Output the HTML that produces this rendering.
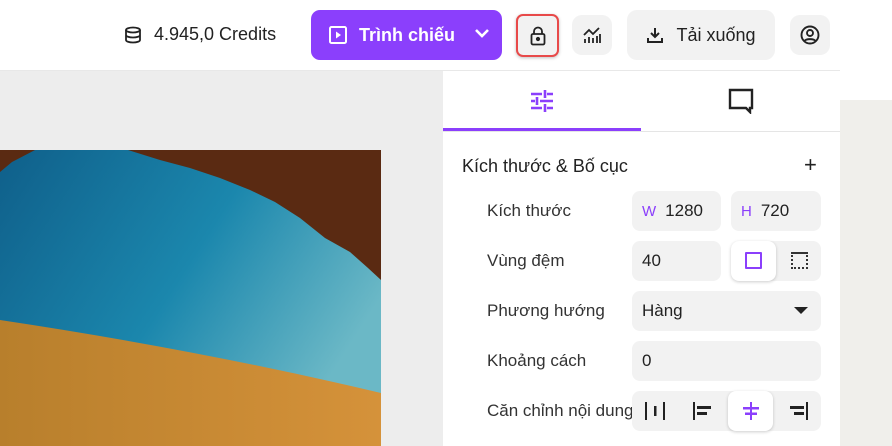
<!DOCTYPE html>
<html><head><meta charset="utf-8"><style>
*{box-sizing:border-box;margin:0;padding:0}
body{width:892px;height:446px;overflow:hidden;position:relative;background:#fff;font-family:"Liberation Sans","Noto Sans CJK SC",sans-serif;color:#222}
.a{position:absolute}
.btn{position:absolute;background:#f2f2f2;border-radius:10px;display:flex;align-items:center;justify-content:center}
.inp{position:absolute;background:#f2f2f2;border-radius:8px;height:40px;display:flex;align-items:center;font-size:17px;color:#222}
.lbl{position:absolute;left:487px;font-size:17px;color:#333}
</style></head><body>
<div class="a" style="left:0;top:71px;width:443px;height:375px;background:#ededed"></div>
<div class="a" style="left:0;top:70px;width:840px;height:1px;background:#e8e8e8"></div>
<div class="a" style="left:840px;top:100px;width:52px;height:346px;background:#f0efeb"></div>
<!-- image -->
<svg class="a" style="left:0;top:150px" width="381" height="296" viewBox="0 0 381 296">
<defs><linearGradient id="sky" x1="0" y1="0" x2="1" y2="0.5"><stop offset="0" stop-color="#0f5f8a"/><stop offset="0.55" stop-color="#1b87ad"/><stop offset="1" stop-color="#6bb8c6"/></linearGradient>
<linearGradient id="sand" x1="0" y1="0" x2="1" y2="0"><stop offset="0" stop-color="#b87f2c"/><stop offset="1" stop-color="#d5923a"/></linearGradient></defs>
<rect width="381" height="296" fill="url(#sky)"/>
<path d="M128 0 L381 0 L381 130 L368 118 L350 102 L325 88 L300 68 L275 52 L250 40 L220 28 L190 18 L160 10 Z" fill="#5a2a12"/>
<path d="M0 0 L35 0 L12 12 L0 22 Z" fill="#5a2a12"/>
<path d="M0 170 Q200 200 381 243 L381 296 L0 296 Z" fill="url(#sand)"/>
</svg>
<!-- header -->
<svg class="a" style="left:124px;top:26px" width="18" height="18" viewBox="0 0 18 18" fill="none" stroke="#222" stroke-width="1.8"><ellipse cx="9" cy="4" rx="7" ry="2.5"/><path d="M2 4v10c0 1.4 3 2.5 7 2.5s7-1.1 7-2.5V4M2 9c0 1.4 3 2.5 7 2.5s7-1.1 7-2.5"/></svg>
<div class="a" style="left:154px;top:24px;font-size:18px;color:#222">4.945,0 Credits</div>
<div class="a" style="left:311px;top:10px;width:191px;height:50px;background:#8b3ffc;border-radius:9px"></div>
<svg class="a" style="left:329px;top:26px" width="18" height="18" viewBox="0 0 18 18" fill="none" stroke="#fff" stroke-width="2"><rect x="1" y="1" width="16" height="16" rx="1.5"/><path d="M7 5.5v7l5-3.5z" fill="#fff" stroke="none"/></svg>
<div class="a" style="left:359px;top:25px;font-size:18px;font-weight:bold;color:#fff">Trình chiếu</div>
<svg class="a" style="left:474px;top:28px" width="16" height="12" viewBox="0 0 16 12" fill="none" stroke="#fff" stroke-width="2.6"><path d="M2 2l6 6 6-6"/></svg>
<div class="btn" style="left:516px;top:14px;width:43px;height:43px;border:2px solid #e84a4a;border-radius:7px;box-shadow:0 1px 3px rgba(0,0,0,.25)"><svg width="16" height="20" viewBox="0 0 16 20" fill="none" stroke="#222" stroke-width="1.8"><rect x="1.5" y="8" width="13" height="10.5" rx="1.5"/><path d="M4 8V5.5a4 4 0 0 1 8 0V8"/><circle cx="8" cy="13" r="1.2" fill="#222"/></svg></div>
<div class="btn" style="left:572px;top:15px;width:40px;height:40px"><svg width="20" height="18" viewBox="0 0 20 18" fill="none" stroke="#222" stroke-width="1.8"><path d="M2 9l5-5 4 4 6-6"/><path d="M3 17v-4M7 17v-6M11 17v-5M15 17v-7M18 17v-9"/></svg></div>
<div class="btn" style="left:627px;top:10px;width:148px;height:50px;border-radius:10px"><svg width="18" height="18" viewBox="0 0 18 18" fill="none" stroke="#222" stroke-width="2" style="margin-right:12px"><path d="M9 2v9M5 7l4 4 4-4M2 12v4h14v-4"/></svg><span style="font-size:18px;color:#222">Tải xuống</span></div>
<div class="btn" style="left:790px;top:15px;width:40px;height:40px"><svg width="20" height="20" viewBox="0 0 20 20" fill="none" stroke="#222" stroke-width="1.9"><circle cx="10" cy="10" r="8.5"/><circle cx="10" cy="8" r="3"/><path d="M4.5 16c1.5-2.5 9.5-2.5 11 0"/></svg></div>
<!-- panel -->
<div class="a" style="left:443px;top:71px;width:397px;height:375px;background:#fff"></div>
<div class="a" style="left:443px;top:131px;width:397px;height:1px;background:#e5e5e5"></div>
<div class="a" style="left:443px;top:128px;width:198px;height:3px;background:#8b3ffc"></div>
<svg class="a" style="left:530px;top:89px" width="24" height="24" viewBox="0 0 24 24" fill="none" stroke="#8b3ffc" stroke-width="2.6"><path d="M1 5h11M17 5h6M15 1v8M1 12h4M10 12h13M7 8v8M1 19h11M17 19h6M15 15v8"/></svg>
<svg class="a" style="left:728px;top:88px" width="26" height="26" viewBox="0 0 26 26" fill="none" stroke="#222" stroke-width="2.4"><path d="M2 2h22v18h-2v4l-4-4H2z"/></svg>
<div class="a" style="left:462px;top:156px;font-size:18px;color:#222">Kích thước &amp; Bố cục</div>
<div class="a" style="left:804px;top:152px;font-size:22px;color:#222">+</div>
<div class="lbl" style="top:201px">Kích thước</div>
<div class="lbl" style="top:251px">Vùng đệm</div>
<div class="lbl" style="top:301px">Phương hướng</div>
<div class="lbl" style="top:351px">Khoảng cách</div>
<div class="lbl" style="top:401px;width:145px;overflow:hidden;white-space:nowrap">Căn chỉnh nội dung</div>
<div class="inp" style="left:632px;top:191px;width:89px;padding-left:10px"><span style="color:#8b3ffc;font-size:15px;margin-right:9px">W</span>1280</div>
<div class="inp" style="left:731px;top:191px;width:90px;padding-left:10px"><span style="color:#8b3ffc;font-size:15px;margin-right:9px">H</span>720</div>
<div class="inp" style="left:632px;top:241px;width:89px;padding-left:10px">40</div>
<div class="inp" style="left:731px;top:241px;width:90px"></div>
<div class="a" style="left:731px;top:241px;width:45px;height:40px;background:#fff;border-radius:8px;box-shadow:0 1px 3px rgba(0,0,0,.2)"></div>
<div class="a" style="left:745px;top:252px;width:17px;height:17px;border:2px solid #8b3ffc;border-radius:1px"></div>
<div class="a" style="left:791px;top:252px;width:17px;height:17px;border-top:2px solid #333;border-left:2px dotted #333;border-right:2px dotted #333;border-bottom:2px dotted #333"></div>
<div class="inp" style="left:632px;top:291px;width:189px;padding-left:10px">Hàng</div>
<svg class="a" style="left:794px;top:307px" width="14" height="8" viewBox="0 0 14 8"><path d="M0 0h14L7 7z" fill="#222"/></svg>
<div class="inp" style="left:632px;top:341px;width:189px;padding-left:10px">0</div>
<div class="inp" style="left:632px;top:391px;width:189px"></div>
<div class="a" style="left:728px;top:391px;width:45px;height:40px;background:#fff;border-radius:8px;box-shadow:0 1px 3px rgba(0,0,0,.2)"></div>
<svg class="a" style="left:644px;top:401px" width="22" height="20" viewBox="0 0 22 20" fill="#222"><rect x="1" y="1" width="2" height="18"/><rect x="19" y="1" width="2" height="18"/><rect x="10" y="5" width="2.5" height="10"/></svg>
<svg class="a" style="left:692px;top:401px" width="22" height="20" viewBox="0 0 22 20" fill="#222"><rect x="1" y="1" width="2" height="18"/><rect x="5" y="5" width="14" height="3"/><rect x="5" y="11" width="10" height="3"/></svg>
<svg class="a" style="left:740px;top:401px" width="22" height="20" viewBox="0 0 22 20" fill="#8b3ffc"><rect x="10" y="1" width="2" height="18"/><rect x="3" y="6" width="16" height="2.5"/><rect x="5" y="11.5" width="12" height="2.5"/></svg>
<svg class="a" style="left:787px;top:401px" width="22" height="20" viewBox="0 0 22 20" fill="#222"><rect x="19" y="1" width="2" height="18"/><rect x="3" y="5" width="14" height="3"/><rect x="7" y="11" width="10" height="3"/></svg>
</body></html>
